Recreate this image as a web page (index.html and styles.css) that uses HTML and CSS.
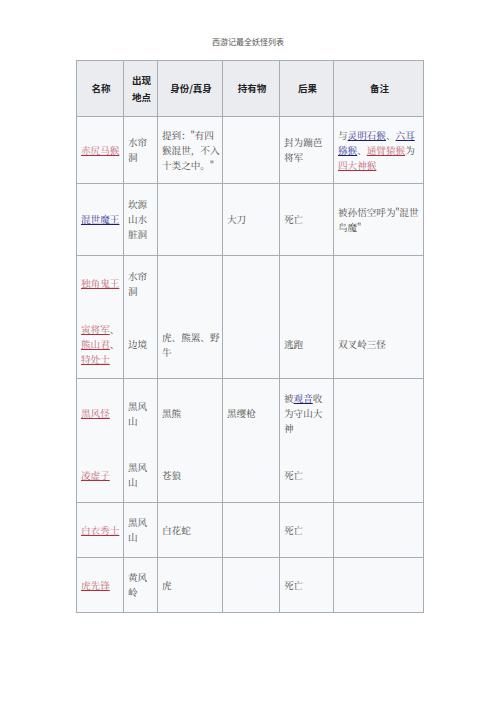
FILE: index.html
```html
<!DOCTYPE html>
<html lang="zh">
<head>
<meta charset="utf-8">
<title>西游记最全妖怪列表</title>
<link rel="stylesheet" href="styles.css">
</head>
<body>
<div class="doc-title">西游记最全妖怪列表</div>
<table class="yao">
  <colgroup>
    <col class="c-name"><col class="c-place"><col class="c-id"><col class="c-item"><col class="c-end"><col class="c-note">
  </colgroup>
  <thead>
    <tr class="r-head">
      <th>名称</th><th>出现<br>地点</th><th>身份/真身</th><th>持有物</th><th>后果</th><th>备注</th>
    </tr>
  </thead>
  <tbody>
    <tr class="r1">
      <td><a class="red">赤尻马猴</a></td>
      <td>水帘<br>洞</td>
      <td>提到："有四<br>猴混世，不入<br>十类之中。"</td>
      <td></td>
      <td>封为蹦芭<br>将军</td>
      <td>与<a class="blue">灵明石猴</a>、<a class="blue">六耳</a><br><a class="blue">猕猴</a>、<a class="red">通臂猿猴</a>为<br><a class="red">四大神猴</a></td>
    </tr>
    <tr class="r2">
      <td><a class="blue">混世魔王</a></td>
      <td>坎源<br>山水<br>脏洞</td>
      <td></td>
      <td>大刀</td>
      <td>死亡</td>
      <td>被孙悟空呼为"混世<br>鸟魔"</td>
    </tr>
    <tr class="r3 open-bottom">
      <td><a class="red">独角鬼王</a></td>
      <td>水帘<br>洞</td>
      <td></td><td></td><td></td><td></td>
    </tr>
    <tr class="r4">
      <td><a class="red">寅将军</a>、<br><a class="red">熊山君</a>、<br><a class="red">特处士</a></td>
      <td>边境</td>
      <td>虎、熊罴、野<br>牛</td>
      <td></td>
      <td>逃跑</td>
      <td>双叉岭三怪</td>
    </tr>
    <tr class="r5 open-bottom">
      <td><a class="red">黑风怪</a></td>
      <td>黑风<br>山</td>
      <td>黑熊</td>
      <td>黑缨枪</td>
      <td>被<a class="blue">观音</a>收<br>为守山大<br>神</td>
      <td></td>
    </tr>
    <tr class="r6">
      <td><a class="red">凌虚子</a></td>
      <td>黑风<br>山</td>
      <td>苍狼</td>
      <td></td>
      <td>死亡</td>
      <td></td>
    </tr>
    <tr class="r7">
      <td><a class="red">白衣秀士</a></td>
      <td>黑风<br>山</td>
      <td>白花蛇</td>
      <td></td>
      <td>死亡</td>
      <td></td>
    </tr>
    <tr class="r8">
      <td><a class="red">虎先锋</a></td>
      <td>黄风<br>岭</td>
      <td>虎</td>
      <td></td>
      <td>死亡</td>
      <td></td>
    </tr>
  </tbody>
</table>
</body>
</html>
```
FILE: styles.css
```css
html, body {
  margin: 0;
  padding: 0;
  background: #ffffff;
}
body {
  font-family: "Noto Sans CJK SC", "Noto Sans", sans-serif;
}
.doc-title {
  padding-top: 37px;
  height: 10px;
  line-height: 10px;
  font-size: 8px;
  color: #555;
  text-align: center;
  margin-bottom: 13px;
}
.yao {
  margin-left: 76px;
  width: 347px;
  table-layout: fixed;
  border-collapse: collapse;
  font-family: "Noto Serif CJK SC", "Liberation Serif", "Noto Sans CJK SC", serif;
  font-size: 9.6px;
  line-height: 15px;
  color: #4d4d4d;
}
.c-name { width: 47px; }
.c-place { width: 34px; }
.c-id { width: 65px; }
.c-item { width: 57px; }
.c-end { width: 54px; }
.c-note { width: 90px; }
.yao th, .yao td {
  border: 1px solid #a7adb4;
  padding: 0 2px 0 4px;
  vertical-align: middle;
  white-space: nowrap;
  overflow: hidden;
}
.yao th {
  background: #eaecf0;
  color: #222;
  font-family: "Noto Sans CJK SC", sans-serif;
  font-size: 9.5px;
  font-weight: 700;
  text-align: center;
  line-height: 17px;
}
.yao td {
  background: #f8f9fa;
  text-align: left;
}
.open-bottom td {
  border-bottom-style: hidden;
}
.r-head { height: 56px; }
.r1 { height: 67px; }
.r2 { height: 72px; }
.r3 { height: 56px; }
.r4 { height: 67px; }
.r5 { height: 70px; }
.r6 { height: 54px; }
.r7 { height: 55px; }
.r8 { height: 55px; }
a.red {
  color: #c06a76;
  text-decoration: underline;
  text-decoration-color: #b03040;
}
a.blue {
  color: #3b3b9a;
  text-decoration: underline;
  text-decoration-color: #1c1c70;
}
```
